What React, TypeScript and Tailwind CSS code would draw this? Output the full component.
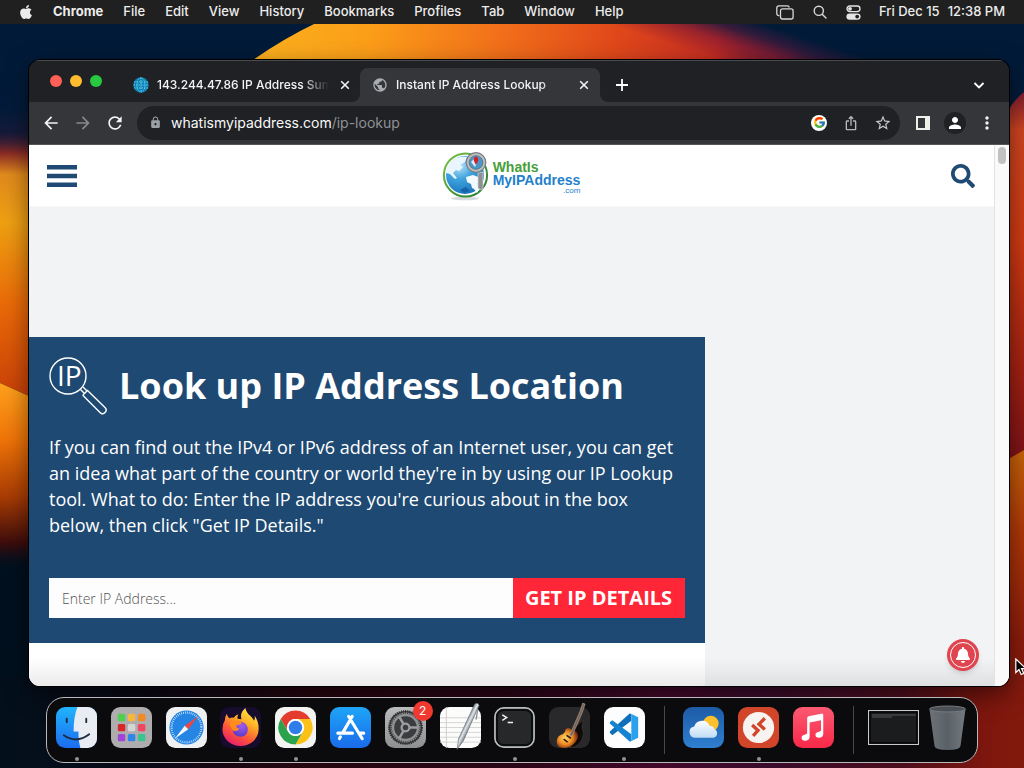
import type { ReactNode } from "react";
import { FaApple, FaBell, FaSearch } from "react-icons/fa";
import { FcGoogle } from "react-icons/fc";
import {
  MdArrowBack,
  MdArrowForward,
  MdIosShare,
  MdLock,
  MdMoreVert,
  MdPerson,
  MdPublic,
  MdRefresh,
  MdStarOutline,
} from "react-icons/md";

const MENUS = ["File", "Edit", "View", "History", "Bookmarks", "Profiles", "Tab", "Window", "Help"];

function Wallpaper() {
  return (
    <svg
      className="absolute inset-0 size-full"
      viewBox="0 0 1024 768"
      preserveAspectRatio="none"
      aria-hidden="true"
    >
      <defs>
        <linearGradient id="sky" x1="0" y1="0" x2="0" y2="1">
          <stop offset="0" stopColor="#001a38" />
          <stop offset="0.18" stopColor="#041b3a" />
          <stop offset="0.75" stopColor="#00101e" />
          <stop offset="1" stopColor="#02101c" />
        </linearGradient>
        <linearGradient id="dome" gradientUnits="userSpaceOnUse" x1="255" y1="30" x2="830" y2="90">
          <stop offset="0" stopColor="#fbb01e" />
          <stop offset="0.2" stopColor="#fb9d18" />
          <stop offset="0.42" stopColor="#f2701a" />
          <stop offset="0.62" stopColor="#e0481a" />
          <stop offset="0.8" stopColor="#c42c22" />
          <stop offset="0.92" stopColor="#7a1c34" stopOpacity="0.8" />
          <stop offset="1" stopColor="#001a38" stopOpacity="0" />
        </linearGradient>
        <linearGradient id="domeFade" gradientUnits="userSpaceOnUse" x1="737" y1="66" x2="752" y2="20">
          <stop offset="0" stopColor="#8a1c30" stopOpacity="0" />
          <stop offset="0.4" stopColor="#7a1a34" stopOpacity="0.6" />
          <stop offset="0.7" stopColor="#2c1a3c" stopOpacity="0.9" />
          <stop offset="1" stopColor="#001a38" />
        </linearGradient>
        <linearGradient id="leftTop" x1="0" y1="0" x2="0" y2="1">
          <stop offset="0" stopColor="#3a1838" stopOpacity="0" />
          <stop offset="0.08" stopColor="#3a1838" stopOpacity="0.3" />
          <stop offset="0.15" stopColor="#8a2c24" />
          <stop offset="0.22" stopColor="#e08a1c" />
          <stop offset="0.38" stopColor="#eea012" />
          <stop offset="0.65" stopColor="#ea6a08" />
          <stop offset="1" stopColor="#c43a08" />
        </linearGradient>
        <linearGradient id="leftLow" x1="0" y1="0" x2="0" y2="1">
          <stop offset="0" stopColor="#ffa21c" />
          <stop offset="0.3" stopColor="#ef7408" />
          <stop offset="0.6" stopColor="#a93c04" />
          <stop offset="0.85" stopColor="#3c0c0c" />
          <stop offset="1" stopColor="#00101e" stopOpacity="0" />
        </linearGradient>
        <linearGradient id="rightTop" x1="0" y1="0" x2="0" y2="1">
          <stop offset="0" stopColor="#7a1c30" />
          <stop offset="0.1" stopColor="#cf4520" />
          <stop offset="0.4" stopColor="#cf3a12" />
          <stop offset="0.75" stopColor="#a02012" />
          <stop offset="1" stopColor="#781018" />
        </linearGradient>
        <linearGradient id="rightLow" x1="0" y1="0" x2="0" y2="1">
          <stop offset="0" stopColor="#c86408" />
          <stop offset="0.25" stopColor="#b03808" />
          <stop offset="0.6" stopColor="#8c1c0c" />
          <stop offset="1" stopColor="#7c160e" />
        </linearGradient>
        <linearGradient id="floor" x1="0" y1="0" x2="1" y2="0">
          <stop offset="0" stopColor="#02101c" />
          <stop offset="0.15" stopColor="#0c0816" />
          <stop offset="0.3" stopColor="#26060f" />
          <stop offset="0.5" stopColor="#2a0616" />
          <stop offset="0.65" stopColor="#43082a" />
          <stop offset="0.75" stopColor="#3a0b2c" />
          <stop offset="0.88" stopColor="#4c0d1c" />
          <stop offset="0.96" stopColor="#7c160e" />
          <stop offset="1" stopColor="#841a0e" />
        </linearGradient>
      </defs>
      <rect width="1024" height="768" fill="url(#sky)" />
      <path d="M220 86Q262 49 318 22H860V86Z" fill="url(#dome)" />
      <rect x="560" y="20" width="320" height="66" fill="url(#domeFade)" />
      <path d="M0 108H60V410L0 383Z" fill="url(#leftTop)" />
      <path d="M0 383L60 410V572H0Z" fill="url(#leftLow)" />
      <path d="M1024 92Q1008 104 1000 130V470L1024 450Z" fill="url(#rightTop)" />
      <path d="M1024 450Q1012 457 1000 464V768H1024Z" fill="url(#rightLow)" />
      <rect y="676" width="1024" height="92" fill="url(#floor)" />
    </svg>
  );
}

function MenuBar() {
  return (
    <header className="relative flex h-6 items-center justify-between bg-[#202020] px-[19px] text-[13px] font-[450] text-[#ececec]">
      <nav className="flex items-center gap-5">
        <a href="#apple" aria-label="Apple menu" className="flex w-[14px] justify-center">
          <FaApple className="size-4 shrink-0" />
        </a>
        <a href="#chrome" className="font-bold">
          Chrome
        </a>
        {MENUS.map((name) => (
          <a key={name} href={`#${name}`}>
            {name}
          </a>
        ))}
      </nav>
      <div className="flex items-center">
        <svg className="mr-[19px] h-[15px] w-[18px]" viewBox="0 0 18 15" fill="none" stroke="#d8d8d8" strokeWidth="1.3">
          <path d="M3.400 10.600H2.800A2 2 0 0 1 .800 8.600V2.900A2 2 0 0 1 2.800.900H11.400A2 2 0 0 1 13.300 2.500" />
          <rect x="4.500" y="3.800" width="12.600" height="10.200" rx="2" />
        </svg>
        <svg className="mr-[19px] size-[14px]" viewBox="0 0 14 14" fill="none" stroke="#d8d8d8" strokeWidth="1.4" strokeLinecap="round">
          <circle cx="5.800" cy="5.800" r="4.600" />
          <path d="M9.200 9.200L13 13" />
        </svg>
        <svg className="mr-[18px] h-[15px] w-[15px]" viewBox="0 0 15 15">
          <rect x="1" y="1" width="13" height="5.600" rx="2.800" fill="none" stroke="#e4e4e4" strokeWidth="1.300" />
          <circle cx="4" cy="3.800" r="1.900" fill="#e4e4e4" />
          <rect x=".400" y="8.400" width="14.200" height="6.400" rx="3.200" fill="#e4e4e4" />
          <circle cx="11.200" cy="11.600" r="1.900" fill="#202020" />
        </svg>
        <time className="flex gap-2">
          <span>Fri Dec 15</span>
          <span>12:38 PM</span>
        </time>
      </div>
    </header>
  );
}

function CloseIcon() {
  return (
    <svg className="size-3" viewBox="0 0 12 12" stroke="#f1f3f4" strokeWidth="1.600">
      <path d="M2.200 2.200L9.800 9.800M9.800 2.200L2.200 9.800" />
    </svg>
  );
}

function Tab({ icon, title, active = false }: { icon: ReactNode; title: string; active?: boolean }) {
  return (
    <div
      role="tab"
      aria-selected={active}
      className={
        active
          ? "relative flex h-[34px] w-60 items-center gap-2 rounded-t-lg bg-[#35363a] pr-2.5 pl-3"
          : "relative flex h-[34px] w-60 items-center gap-2 pr-[9px] pl-[13px]"
      }
    >
      {active && (
        <>
          <svg className="absolute bottom-0 -left-2 size-2" viewBox="0 0 8 8" fill="#35363a">
            <path d="M8 0V8H0A8 8 0 0 0 8 0Z" />
          </svg>
          <svg className="absolute -right-2 bottom-0 size-2" viewBox="0 0 8 8" fill="#35363a">
            <path d="M0 0V8H8A8 8 0 0 1 0 0Z" />
          </svg>
        </>
      )}
      {icon}
      <span className="min-w-0 flex-1 overflow-hidden mask-r-from-84% mask-r-to-100% text-[12px] font-medium whitespace-nowrap text-[#f1f3f4]">
        {title}
      </span>
      <button type="button" aria-label="Close tab" className="ml-0.5">
        <CloseIcon />
      </button>
    </div>
  );
}

function DottedGlobe() {
  return (
    <svg className="size-4 shrink-0" viewBox="0 0 16 16">
      <circle cx="8" cy="8" r="7.700" fill="#137fb3" />
      <g fill="none" stroke="#5ad0ea" strokeWidth="1" strokeDasharray="1.500 1">
        <path d="M8 .500V15.500M1 5H15M.500 8H15.500M1 11H15" />
        <ellipse cx="8" cy="8" rx="4" ry="7" />
      </g>
    </svg>
  );
}

function TabStrip() {
  return (
    <div className="flex h-[42px] items-end border-t border-[#4a4b4e] bg-[#202124]">
      <div className="mr-[18px] ml-[21px] flex gap-2 pb-[15px]">
        <button type="button" aria-label="Close" className="size-3 rounded-full bg-[#fe5f57]" />
        <button type="button" aria-label="Minimize" className="size-3 rounded-full bg-[#febc2e]" />
        <button type="button" aria-label="Zoom" className="size-3 rounded-full bg-[#28c840]" />
      </div>
      <div role="tablist" className="flex">
        <Tab icon={<DottedGlobe />} title="143.244.47.86 IP Address Summary" />
        <Tab active icon={<MdPublic className="size-4 shrink-0 text-[#a9acb1]" />} title="Instant IP Address Lookup" />
      </div>
      <button type="button" aria-label="New tab" className="mb-[11px] ml-4">
        <svg className="size-3" viewBox="0 0 12 12" stroke="#fff" strokeWidth="1.800">
          <path d="M6 0V12M0 6H12" />
        </svg>
      </button>
      <button type="button" aria-label="Search tabs" className="mr-6 mb-[11px] ml-auto">
        <svg className="size-3" viewBox="0 0 12 12" fill="none" stroke="#fff" strokeWidth="1.800">
          <path d="M1.500 4L6 8.500L10.500 4" />
        </svg>
      </button>
    </div>
  );
}

function ToolButton({ label, children }: { label: string; children: ReactNode }) {
  return (
    <button type="button" aria-label={label} className="flex size-8 shrink-0 items-center justify-center">
      {children}
    </button>
  );
}

function Toolbar() {
  return (
    <div className="flex h-[43px] items-center border-b border-[#55565a] bg-[#35363a] px-[6px] text-[#f1f3f4]">
      <ToolButton label="Back">
        <MdArrowBack className="size-5" />
      </ToolButton>
      <ToolButton label="Forward">
        <MdArrowForward className="size-5 text-[#86888c]" />
      </ToolButton>
      <ToolButton label="Reload">
        <MdRefresh className="size-5" />
      </ToolButton>
      <div className="mr-[7px] ml-[6px] flex h-[34px] flex-1 items-center rounded-full bg-[#202124] pr-px pb-px pl-3 text-[#9aa0a6]">
        <MdLock className="size-[13px]" />
        <a href="#ip-lookup" className="mr-auto ml-[9px] text-[14px] text-[#8e9196]">
          <span className="text-[#f8f9fa]">whatismyipaddress.com</span>/ip-lookup
        </a>
        <ToolButton label="Search with Google">
          <span className="flex size-4 items-center justify-center rounded-full bg-white">
            <FcGoogle className="size-[13px]" />
          </span>
        </ToolButton>
        <ToolButton label="Share">
          <MdIosShare className="size-4 text-[#b5b8bc]" />
        </ToolButton>
        <ToolButton label="Bookmark">
          <MdStarOutline className="size-[18px] text-[#c5c8cc]" />
        </ToolButton>
      </div>
      <ToolButton label="Side panel">
        <svg className="size-[14px]" viewBox="0 0 14 14">
          <rect x="1" y="1" width="12" height="12" fill="none" stroke="#eef0ea" strokeWidth="2" />
          <rect x="9" y="1" width="4" height="12" fill="#eef0ea" />
        </svg>
      </ToolButton>
      <ToolButton label="Profile">
        <span className="flex size-[22px] items-center justify-center rounded-full bg-[#202124]">
          <MdPerson className="size-[18px] text-white" />
        </span>
      </ToolButton>
      <ToolButton label="More">
        <MdMoreVert className="size-5" />
      </ToolButton>
    </div>
  );
}

function SiteLogo() {
  return (
    <a href="#home" aria-label="What Is My IP Address" className="flex items-center gap-1">
      <svg className="h-[50px] w-[47px]" viewBox="0 0 47 50">
        <defs>
          <radialGradient id="sea" cx="0.35" cy="0.25" r="0.9">
            <stop offset="0" stopColor="#bfe4f8" />
            <stop offset="0.4" stopColor="#3fa3de" />
            <stop offset="1" stopColor="#1268b4" />
          </radialGradient>
          <linearGradient id="ring" x1="0" y1="0" x2="1" y2="1">
            <stop offset="0" stopColor="#7cc242" />
            <stop offset="1" stopColor="#1f7a34" />
          </linearGradient>
        </defs>
        <ellipse cx="23" cy="47.500" rx="14" ry="1.800" fill="#d9dcde" />
        <circle cx="23.500" cy="24" r="21.600" fill="#fff" stroke="url(#ring)" strokeWidth="2" />
        <circle cx="23" cy="24" r="19" fill="url(#sea)" />
        <path d="M8 11Q15 5 25 6L23 11L18 14L21 16L17 20L14 19L11 22L15 27L13 28L8 23L4 22Q4 15 8 11Z" fill="#e9f6fd" />
        <path d="M24 26L31 24L39 27L40 33L35 42L32 38L30 37L29 33L25 31Z" fill="#f3fafe" />
        <path d="M18 39L24 36L28 40L22 42Z" fill="#1763a8" />
        <path d="M36 22L41 21V38Q38 40 36 37Z" fill="#8d8f92" stroke="#d7d8da" strokeWidth=".700" />
        <circle cx="34" cy="11.500" r="9.800" fill="#b9bec3" stroke="#777d83" strokeWidth="1.200" />
        <circle cx="34" cy="11.500" r="6.800" fill="#4a97c9" stroke="#606a73" strokeWidth=".800" />
        <path d="M29 11L32 8L35 12L33 16Z" fill="#dbeef8" />
        <path d="M34 14C31 9 31 7 34 5.500C37 7 37 9 34 14Z" fill="#d42027" />
      </svg>
      <span className="flex flex-col pt-1 font-[Liberation_Sans,Arial,sans-serif] text-[14px] leading-[13px] font-bold">
        <span className="text-[#45a03a]">WhatIs</span>
        <span className="text-[#1f80cc]">MyIPAddress</span>
        <span className="self-end text-[8px] leading-[8px] font-normal text-[#1f80cc]">.com</span>
      </span>
    </a>
  );
}

function LookupIcon() {
  return (
    <svg className="size-[58px] shrink-0" viewBox="0 0 58 58" fill="none" stroke="#fff" strokeWidth="1.400" aria-hidden="true">
      <circle cx="19" cy="19" r="18" />
      <text x="8" y="29" fill="#fff" stroke="none" className="font-['Open_Sans',sans-serif] text-[28px]">
        IP
      </text>
      <path d="M31.500 32.500L35.500 36.500M34 30L38 34" />
      <path d="M35 37L38.500 33.500L56 50.500Q58.500 53 56 55.500Q53.500 58 51 55.500L34.500 39Q33.500 38 35 37Z" />
    </svg>
  );
}

function WebPage() {
  return (
    <div className="flex min-h-0 flex-1 bg-[#f1f3f5] font-['Open_Sans',sans-serif]">
      <div className="relative flex min-w-0 flex-1 flex-col">
        <header className="grid h-[62px] grid-cols-[1fr_auto_1fr] items-center border-b border-[#f6f7f8] bg-white pr-[19px] pl-[18px]">
          <button type="button" aria-label="Menu" className="justify-self-start">
            <svg className="h-[22px] w-[30px]" viewBox="0 0 30 22" fill="#1f4a73">
              <path d="M0 0H30V4.600H0ZM0 8.700H30V13.300H0ZM0 17.400H30V22H0Z" />
            </svg>
          </button>
          <SiteLogo />
          <button type="button" aria-label="Search" className="justify-self-end">
            <FaSearch className="size-6 text-[#1f4a73]" />
          </button>
        </header>
        <main className="mt-[130px] flex w-7/10 flex-1 flex-col bg-white">
          <section className="bg-[#1e4972] px-5 pt-5 pb-[25px] text-white">
            <div className="flex items-center gap-3">
              <LookupIcon />
              <h1 className="text-[36px] leading-[58px] font-bold whitespace-nowrap">Look up IP Address Location</h1>
            </div>
            <p className="mt-[19px] text-[18px] leading-[26px] font-medium">
              If you can find out the IPv4 or IPv6 address of an Internet user, you can get an idea what part of the
              country or world they're in by using our IP Lookup tool. What to do: Enter the IP address you're curious
              about in the box below, then click "Get IP Details."
            </p>
            <form className="mt-10 flex h-10" onSubmit={(event) => event.preventDefault()}>
              <input
                type="text"
                aria-label="IP address"
                placeholder="Enter IP Address..."
                className="min-w-0 flex-1 bg-[#fdfdfd] px-[13px] text-[14px] font-light text-[#333] outline-none placeholder:text-[#555]"
              />
              <button type="submit" className="w-[172px] bg-[#ff2638] text-[20px] font-bold whitespace-nowrap text-white">
                GET IP DETAILS
              </button>
            </form>
          </section>
        </main>
        <div className="pointer-events-none absolute inset-x-0 bottom-0 h-7 bg-linear-to-b from-transparent to-black/8" />
        <button
          type="button"
          aria-label="Notifications"
          className="absolute right-[15px] bottom-[15px] flex size-8 items-center justify-center rounded-full bg-[#e0444e] shadow-md"
        >
          <span className="flex size-[26px] items-center justify-center rounded-full border border-white">
            <FaBell className="size-4 text-white" />
          </span>
        </button>
      </div>
      <div className="flex w-[15px] justify-center border-l border-[#e2e2e2] bg-[#fafafa] pt-[2px]">
        <div className="h-[17px] w-2 rounded-full bg-[#c1c1c1]" />
      </div>
    </div>
  );
}

function FinderIcon() {
  return (
    <>
      <defs>
        <linearGradient id="finder" x1="0" y1="0" x2="0" y2="1">
          <stop offset="0" stopColor="#21b4fb" />
          <stop offset="1" stopColor="#1b6df0" />
        </linearGradient>
      </defs>
      <rect width="42" height="42" rx="9.500" fill="url(#finder)" />
      <path d="M22 0H32.500A9.500 9.500 0 0 1 42 9.500V32.500A9.500 9.500 0 0 1 32.500 42H25Q23 35 23 25H18Q18 10 22 0Z" fill="#e9edf3" />
      <g fill="none" stroke="#1d2b40" strokeWidth="1.900" strokeLinecap="round">
        <path d="M11 12V15.500M31 12V15.500M8 29Q21 38 34 28" />
      </g>
    </>
  );
}

const LAUNCHPAD_COLORS = ["#4fd04c", "#f6b73c", "#f08a24", "#d8262c", "#d5d6d4", "#f2455f", "#a144d8", "#2d86ea", "#3ac48f"];

function LaunchpadIcon() {
  return (
    <>
      <rect width="42" height="42" rx="9.500" fill="#aeacac" />
      {LAUNCHPAD_COLORS.map((color, i) => (
        <rect key={color} x={7 + (i % 3) * 10.3} y={7 + Math.floor(i / 3) * 10.3} width="7.600" height="7.600" rx="1.600" fill={color} />
      ))}
    </>
  );
}

function SafariIcon() {
  return (
    <>
      <rect width="42" height="42" rx="9.500" fill="#eef0f2" />
      <circle cx="21" cy="21" r="17.500" fill="#2585e4" />
      <circle cx="21" cy="21" r="15.300" fill="none" stroke="#e4f2ff" strokeWidth="2.200" strokeDasharray=".7 1.303" />
      <path d="M33 9.500L22.800 22.800L19.200 19.200Z" fill="#f0443c" />
      <path d="M9 32.500L22.800 22.800L19.200 19.200Z" fill="#f4f6f8" />
    </>
  );
}

function FirefoxIcon() {
  return (
    <>
      <defs>
        <linearGradient id="fox" x1="0.8" y1="0" x2="0.25" y2="1">
          <stop offset="0" stopColor="#fff14a" />
          <stop offset="0.35" stopColor="#ffae24" />
          <stop offset="0.65" stopColor="#ff5a36" />
          <stop offset="1" stopColor="#e6196e" />
        </linearGradient>
        <radialGradient id="foxCore" cx="0.6" cy="0.3" r="0.8">
          <stop offset="0" stopColor="#a05bf0" />
          <stop offset="1" stopColor="#5136c0" />
        </radialGradient>
      </defs>
      <rect width="42" height="42" rx="9.500" fill="#170b2e" />
      <path
        d="M26 1Q27 6 31 9Q34 12 35 14Q36 11 35.500 9Q40 15 39.500 23A18.500 17 0 0 1 2.500 23Q2.500 17 5 13.500Q5 10 7 7Q7.500 10 9.500 11.500Q12 10.500 14 11Q16 8.500 19 7.500Q17.500 9.500 18 12Q20 12 22 12.500Q20 6 26 1Z"
        fill="url(#fox)"
      />
      <path d="M14 18Q17 14 22 15Q28 16.500 28.500 23Q28 30 21 30.500Q14 30 13 23Q13 20 14 18Z" fill="url(#foxCore)" />
      <path d="M10 16Q14 12.500 20 14Q22 15 22.500 17Q20 18.500 16.500 19Q17 22.500 20 22Q17 26 13.500 24Q9.500 20 10 16Z" fill="#ff8b1e" />
    </>
  );
}

function ChromeIcon() {
  return (
    <>
      <rect width="42" height="42" rx="9.500" fill="#f3f3f2" />
      <circle cx="21" cy="21" r="17.500" fill="#fff" />
      <path d="M5.840 12.250A17.500 17.500 0 0 1 36.160 12.250H21A8.750 8.750 0 0 0 13.420 25.380Z" fill="#e33b2e" />
      <path d="M36.160 12.250A17.500 17.500 0 0 1 21 38.500L28.580 25.380A8.750 8.750 0 0 0 21 12.250Z" fill="#fbc116" />
      <path d="M21 38.500A17.500 17.500 0 0 1 5.840 12.250L13.420 25.380A8.750 8.750 0 0 0 28.580 25.380Z" fill="#2ba24c" />
      <circle cx="21" cy="21" r="8.600" fill="#fff" />
      <circle cx="21" cy="21" r="6.900" fill="#2f7de9" />
    </>
  );
}

function AppStoreIcon() {
  return (
    <>
      <defs>
        <linearGradient id="store" x1="0" y1="0" x2="0" y2="1">
          <stop offset="0" stopColor="#1ea5f7" />
          <stop offset="1" stopColor="#1a6bea" />
        </linearGradient>
      </defs>
      <rect width="42" height="42" rx="9.500" fill="url(#store)" />
      <g fill="none" stroke="#fff" strokeWidth="3.200" strokeLinecap="round">
        <path d="M22.800 9.500L13 26.500M19 9.500L33 32.500M8 26.800H23M29.500 26.800H34.500M10.700 30.500L9.700 32.300" />
      </g>
    </>
  );
}

function SettingsIcon() {
  return (
    <>
      <defs>
        <linearGradient id="settings" x1="0" y1="0" x2="0" y2="1">
          <stop offset="0" stopColor="#b9bbbc" />
          <stop offset="1" stopColor="#8d8f91" />
        </linearGradient>
      </defs>
      <rect width="42" height="42" rx="9.500" fill="url(#settings)" />
      <circle cx="21" cy="21" r="17" fill="#3b3c3e" />
      <circle cx="21" cy="21" r="17" fill="none" stroke="#26282a" strokeWidth="1.600" strokeDasharray="1.200 1" />
      <circle cx="21" cy="21" r="12.800" fill="none" stroke="#8f9193" strokeWidth="2.400" />
      <circle cx="21" cy="21" r="14.700" fill="none" stroke="#8f9193" strokeWidth="1.400" strokeDasharray="1.300 1.009" />
      <circle cx="21" cy="21" r="4" fill="none" stroke="#9b9da0" strokeWidth="2.400" />
      <path d="M25 21H33.500M19 17.500L14.700 10.100M19 24.500L14.700 31.900" stroke="#9b9da0" strokeWidth="2.600" />
    </>
  );
}

function TextEditIcon() {
  return (
    <>
      <defs>
        <linearGradient id="pen" gradientUnits="userSpaceOnUse" x1="25" y1="17" x2="31" y2="20">
          <stop offset="0" stopColor="#6f7780" />
          <stop offset="0.5" stopColor="#dfe4e8" />
          <stop offset="1" stopColor="#7d858e" />
        </linearGradient>
      </defs>
      <rect width="42" height="42" rx="9.500" fill="#fcfcfb" />
      <path d="M0 11H42M0 16H42M0 21H42M0 26H42M0 31H42M0 36H42" stroke="#cfd0d2" strokeWidth=".900" />
      <path d="M6.500 0V42" stroke="#d3c7c7" strokeWidth=".900" />
      <path d="M35.500 -3Q39 -5 40 -1.500L24 34.500L17.500 43.500L19 32.500Z" fill="url(#pen)" stroke="#5f666e" strokeWidth=".600" />
      <path d="M38.500 3L37 13" stroke="#8b939b" strokeWidth="1.400" />
    </>
  );
}

function TerminalIcon() {
  return (
    <>
      <rect x="1" y="1" width="40" height="40" rx="9" fill="#262829" stroke="#b9bcbd" strokeWidth="1.800" />
      <rect x="3" y="3" width="36" height="36" rx="7" fill="none" stroke="#0c0d0e" strokeWidth="2" />
      <path d="M8.500 8L13 10.800L8.500 13.600M14 15.800H19.500" fill="none" stroke="#f2f2f2" strokeWidth="1.500" />
    </>
  );
}

function GarageBandIcon() {
  return (
    <>
      <defs>
        <radialGradient id="guitar" cx="0.4" cy="0.5" r="0.6">
          <stop offset="0" stopColor="#ffd662" />
          <stop offset="0.55" stopColor="#ee8a24" />
          <stop offset="1" stopColor="#6c220a" />
        </radialGradient>
      </defs>
      <rect width="42" height="42" rx="9.500" fill="#29292b" />
      <path d="M26 22Q31 15 36 14Q33 18 34 22Q37 29 32 36Q27 42 22 41Z" fill="#0e0b0a" stroke="#57402e" strokeWidth=".500" />
      <path d="M17 23Q20 20 23 23Q25 25 28 25Q32 30 27 36Q22 42 14 42Q7 41 8 34Q9 29 14 28Q17 26 17 23Z" fill="url(#guitar)" />
      <path d="M21 29L31.500 5L34.500 -4L37 -3L34 6L23.500 30Z" fill="#7a6558" stroke="#c9b9ab" strokeWidth=".500" />
      <path d="M15 33L19 36M18 29L22.500 32" stroke="#2b1b12" strokeWidth="1.600" />
    </>
  );
}

function CodeIcon() {
  return (
    <>
      <rect width="42" height="42" rx="9.500" fill="#fdfdfe" />
      <path d="M6 26.500L8.500 29L28 14V8L26.500 6.500L6 25Z" fill="#0f6fb8" />
      <path d="M6 15.500L8.500 13.500L28 28V34.500L26.500 35.500L6 17Z" fill="#1484d0" />
      <path d="M26.500 6.500L35 10.500V31.500L26.500 35.500Q28 35 28 33V9Q28 7 26.500 6.500Z" fill="#2ba0ec" />
    </>
  );
}

function WeatherIcon() {
  return (
    <>
      <defs>
        <linearGradient id="weather" x1="0" y1="0" x2="0" y2="1">
          <stop offset="0" stopColor="#1d5ba6" />
          <stop offset="1" stopColor="#2f7fd0" />
        </linearGradient>
        <linearGradient id="cloud" x1="0" y1="0" x2="0" y2="1">
          <stop offset="0" stopColor="#fdfeff" />
          <stop offset="1" stopColor="#bfdcf6" />
        </linearGradient>
      </defs>
      <rect width="42" height="42" rx="9.500" fill="url(#weather)" />
      <circle cx="28.500" cy="17" r="8" fill="#fbc02c" />
      <path d="M12 31.500A5.800 5.800 0 0 1 11.500 20A8.500 8.500 0 0 1 27.500 19.500Q31 19 32 22.500A4.800 4.800 0 0 1 31.500 31.500Z" fill="url(#cloud)" />
    </>
  );
}

function RemoteDesktopIcon() {
  return (
    <>
      <rect width="42" height="42" rx="9.500" fill="#d1452a" />
      <circle cx="21" cy="21" r="16" fill="#f7f3f1" />
      <path d="M14.500 18.500L20.500 24L15.500 29.500M27.500 11.500L21.500 17.500L27.500 23" fill="none" stroke="#d1452a" strokeWidth="3.400" />
    </>
  );
}

function MusicIcon() {
  return (
    <>
      <defs>
        <linearGradient id="music" x1="0" y1="0" x2="0" y2="1">
          <stop offset="0" stopColor="#fb5a72" />
          <stop offset="1" stopColor="#f92848" />
        </linearGradient>
      </defs>
      <rect width="42" height="42" rx="9.500" fill="url(#music)" />
      <path d="M14.500 11.500Q14.500 10 16 9.600L29 6.800Q31 6.500 31 8.300V27.500Q31 31 27.300 31.500Q23 31.800 23 28.500Q23 26 26.500 25.300Q28.700 25 28.700 23.500V13.500L17 16V30.500Q17 34 13 34.500Q8.800 34.700 8.800 31.500Q9 28.800 12.500 28.200Q14.500 27.800 14.500 26Z" fill="#fff" />
    </>
  );
}

function DockItem({
  label,
  running = false,
  badge,
  children,
}: {
  label: string;
  running?: boolean;
  badge?: string;
  children: ReactNode;
}) {
  return (
    <button type="button" aria-label={label} className="relative size-[41px] shrink-0">
      <svg viewBox="0 0 42 42" className="size-full overflow-visible">
        {children}
      </svg>
      {badge && (
        <span className="absolute -top-[6px] -right-[7px] flex size-5 items-center justify-center rounded-full bg-[#f0382e] text-[12px] text-white">
          {badge}
        </span>
      )}
      {running && <span className="absolute -bottom-[13px] left-1/2 size-1 -translate-x-1/2 rounded-full bg-[#929292]" />}
    </button>
  );
}

function Dock() {
  return (
    <footer className="relative mx-auto mt-[11px] mb-[5px] flex h-[66px] w-full max-w-[932px] items-center rounded-[18px] border border-[#b9b9bb] bg-[#0b0b0d] pr-[10px] pb-[5px] pl-[9px]">
      <div className="flex flex-1 justify-between">
        <DockItem label="Finder" running>
          <FinderIcon />
        </DockItem>
        <DockItem label="Launchpad">
          <LaunchpadIcon />
        </DockItem>
        <DockItem label="Safari">
          <SafariIcon />
        </DockItem>
        <DockItem label="Firefox" running>
          <FirefoxIcon />
        </DockItem>
        <DockItem label="Chrome" running>
          <ChromeIcon />
        </DockItem>
        <DockItem label="App Store">
          <AppStoreIcon />
        </DockItem>
        <DockItem label="System Settings" badge="2">
          <SettingsIcon />
        </DockItem>
        <DockItem label="TextEdit">
          <TextEditIcon />
        </DockItem>
        <DockItem label="Terminal" running>
          <TerminalIcon />
        </DockItem>
        <DockItem label="GarageBand">
          <GarageBandIcon />
        </DockItem>
        <DockItem label="Visual Studio Code" running>
          <CodeIcon />
        </DockItem>
      </div>
      <div className="mt-1 mr-[18px] ml-[19px] h-12 w-px bg-[#48484a]" />
      <div className="flex gap-[14px]">
        <DockItem label="Weather">
          <WeatherIcon />
        </DockItem>
        <DockItem label="Remote Desktop" running>
          <RemoteDesktopIcon />
        </DockItem>
        <DockItem label="Music">
          <MusicIcon />
        </DockItem>
      </div>
      <div className="mt-1 mr-[14px] ml-[19px] h-12 w-px bg-[#48484a]" />
      <button type="button" aria-label="Minimized window" className="mr-[9px]">
        <svg className="h-[35px] w-[51px]" viewBox="0 0 51 35">
          <rect x=".600" y=".600" width="49.800" height="33.800" fill="#1b1c1e" stroke="#c9c9ca" strokeWidth="1.200" />
          <rect x="2" y="2" width="47" height="31" fill="none" stroke="#050505" strokeWidth="1.600" />
          <path d="M4 5H48M4 7H24" stroke="#56585a" strokeWidth="1" />
        </svg>
      </button>
      <button type="button" aria-label="Trash">
        <svg className="h-[46px] w-[39px]" viewBox="0 0 39 46">
          <defs>
            <linearGradient id="bin" x1="0" y1="0" x2="1" y2="0">
              <stop offset="0" stopColor="#6d7378" />
              <stop offset="0.5" stopColor="#596067" />
              <stop offset="1" stopColor="#747a80" />
            </linearGradient>
          </defs>
          <path d="M1.500 4L6.500 41Q7 45 19.500 45Q32 45 32.500 41L37.500 4Z" fill="url(#bin)" />
          <ellipse cx="19.500" cy="4" rx="18" ry="3" fill="#4a5056" stroke="#757b80" strokeWidth="1" />
        </svg>
      </button>
    </footer>
  );
}

export default function App() {
  return (
    <div className="relative flex min-h-screen flex-col overflow-hidden bg-[#001a38] font-[Inter,Roboto,sans-serif]">
      <Wallpaper />
      <MenuBar />
      <div className="relative mt-9 mr-[15px] ml-[29px] flex flex-1 flex-col overflow-hidden rounded-[11px] shadow-[0_0_0_1px_#000,0_8px_24px_rgba(0,0,0,0.5)]">
        <TabStrip />
        <Toolbar />
        <WebPage />
      </div>
      <Dock />
      <svg className="pointer-events-none absolute top-[658px] -right-[3px] h-[18px] w-3" viewBox="0 0 12 18" aria-hidden="true">
        <path d="M.800 1V14.500L4 11.500L6.200 16.500L8.800 15.400L6.600 10.600H11Z" fill="#050505" stroke="#fff" strokeWidth="1.200" />
      </svg>
    </div>
  );
}
